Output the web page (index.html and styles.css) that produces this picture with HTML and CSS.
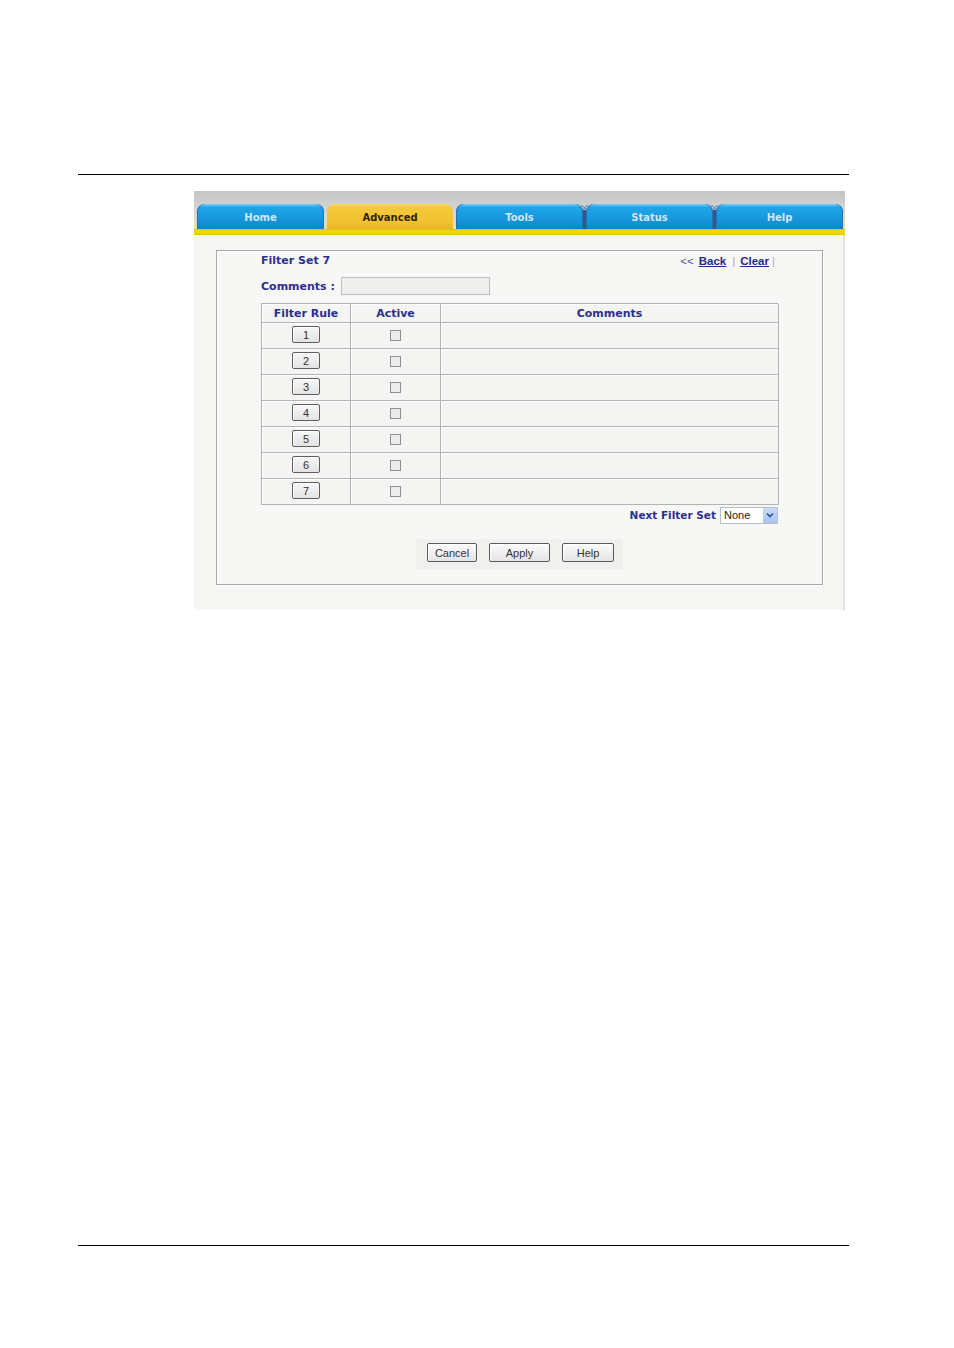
FILE: index.html
```html
<!DOCTYPE html>
<html>
<head>
<meta charset="utf-8">
<link rel="stylesheet" href="styles.css">
</head>
<body>
<div class="page">
  <div class="rule rule-top"></div>
  <div class="shot">
    <div class="topband"></div>
    <div class="tabs">
      <div class="tab blue">Home</div>
      <div class="tab gold">Advanced</div>
      <div class="tab blue">Tools</div>
      <div class="tab blue sep">Status</div>
      <div class="tab blue sep">Help</div>
    </div>
    <div class="strip"></div>
    <div class="content">
      <div class="panel">
        <div class="head-row">
          <span class="title">Filter Set 7</span>
          <span class="nav"><span class="lt">&lt;&lt;</span><a href="#">Back</a><span class="bar">|</span><a href="#">Clear</a><span class="bar last">|</span></span>
        </div>
        <div class="comments-row">
          <span class="label">Comments :</span>
          <span class="input"></span>
        </div>
        <div class="tbl">
          <div class="th">Filter Rule</div>
          <div class="th">Active</div>
          <div class="th">Comments</div>

          <div class="td"><span class="btn-num">1</span></div>
          <div class="td"><span class="chk"></span></div>
          <div class="td"></div>

          <div class="td"><span class="btn-num">2</span></div>
          <div class="td"><span class="chk"></span></div>
          <div class="td"></div>

          <div class="td"><span class="btn-num">3</span></div>
          <div class="td"><span class="chk"></span></div>
          <div class="td"></div>

          <div class="td"><span class="btn-num">4</span></div>
          <div class="td"><span class="chk"></span></div>
          <div class="td"></div>

          <div class="td"><span class="btn-num">5</span></div>
          <div class="td"><span class="chk"></span></div>
          <div class="td"></div>

          <div class="td"><span class="btn-num">6</span></div>
          <div class="td"><span class="chk"></span></div>
          <div class="td"></div>

          <div class="td"><span class="btn-num">7</span></div>
          <div class="td"><span class="chk"></span></div>
          <div class="td"></div>
        </div>
        <div class="next-row">
          <span class="label">Next Filter Set</span>
          <span class="select"><span class="sel-text">None</span><span class="sel-arrow"><svg width="8" height="6" viewBox="0 0 8 6"><path d="M1 1.5 L4 4.5 L7 1.5" fill="none" stroke="#2b4f9e" stroke-width="1.6"/></svg></span></span>
        </div>
        <div class="actions">
          <span class="btn w-cancel">Cancel</span>
          <span class="btn w-apply">Apply</span>
          <span class="btn w-help">Help</span>
        </div>
      </div>
    </div>
  </div>
  <div class="rule rule-bottom"></div>
</div>
</body>
</html>
```

FILE: styles.css
```css
html, body {
  margin: 0;
  padding: 0;
  background: #ffffff;
}

.page {
  width: 954px;
  height: 1348px;
  padding-top: 174px;
  box-sizing: border-box;
}

.rule {
  margin-left: 78px;
  width: 771px;
  border-top: 1px solid #000;
}

.rule-bottom {
  margin-top: 635px;
}

.shot {
  margin-top: 16px;
  margin-left: 194px;
  width: 651px;
  height: 419px;
  background: #f6f6f4;
  display: flex;
  flex-direction: column;
  box-shadow: inset -2px 0 0 #e2e2e2;
}

.topband {
  height: 13px;
  background: linear-gradient(#c4c4c4, #cfcfcf);
}

.tabs {
  height: 25px;
  display: flex;
  gap: 3px;
  padding: 0 2px 0 3px;
  background: linear-gradient(#cfcfcf, #d6d6d6 40%, #e9e2a0);
}

.tab {
  position: relative;
  width: 127px;
  border-radius: 8px 8px 0 0;
  font-family: "DejaVu Sans", Verdana, sans-serif;
  font-weight: bold;
  font-size: 10px;
  display: flex;
  align-items: center;
  justify-content: center;
  padding-top: 2px;
  box-sizing: border-box;
}

.tab.blue {
  background: linear-gradient(#7fd2f6 0px, #22a6e8 3px, #1596dc 60%, #1383cc);
  color: #cfe7f7;
  box-shadow: inset 1px 0 0 #2a6fae, inset -1px 0 0 #2a6fae;
}

.tab.gold {
  width: 126px;
  background: linear-gradient(#f8dc6a 0px, #f5c93c 3px, #f2c230 70%, #e9b522);
  color: #2e2404;
}

.tab.sep::before {
  content: "";
  position: absolute;
  left: -3px;
  top: 6px;
  bottom: 0;
  width: 3px;
  background: #2b5a93;
}

.tab.sep::after {
  content: "";
  position: absolute;
  left: -5px;
  top: 1px;
  width: 7px;
  height: 6px;
  background: linear-gradient(135deg, transparent 40%, #4f7fb5 50%, transparent 60%),
              linear-gradient(225deg, transparent 40%, #4f7fb5 50%, transparent 60%);
}

.strip {
  height: 6px;
  background: linear-gradient(#c9b400 0px, #ecd60e 1px, #efd81a 4px, #d8c400);
}

.content {
  flex: 1;
  padding: 15px 22px 25px 22px;
}

.panel {
  width: 607px;
  height: 335px;
  box-sizing: border-box;
  border: 1px solid #a7a7a7;
  box-shadow: inset 1px 1px 0 #ffffff, 1px 1px 0 #ffffff;
  background: #f7f7f5;
  padding: 0 44px 0 44px;
  display: flex;
  flex-direction: column;
}

.head-row {
  height: 19px;
  display: flex;
  align-items: center;
  justify-content: space-between;
  padding-right: 3px;
}

.title, .label, .th {
  font-family: "DejaVu Sans", Verdana, sans-serif;
  font-weight: bold;
  font-size: 11px;
  color: #2c2f8e;
}

.nav {
  font-family: "Liberation Sans", Arial, sans-serif;
  font-size: 11.5px;
  color: #5a5ea0;
  display: flex;
  align-items: center;
}

.nav a {
  color: #242a8a;
  font-weight: bold;
  text-decoration: underline;
}

.nav .bar {
  color: #a8a8c0;
  margin: 0 5px 0 6px;
}

.nav .bar.last {
  margin-right: 0;
  margin-left: 3px;
}

.nav .lt {
  color: #4c5096;
  margin-right: 5px;
}

.comments-row {
  margin-top: 7px;
  height: 18px;
  display: flex;
  align-items: center;
  gap: 6px;
}

.input {
  width: 149px;
  height: 18px;
  box-sizing: border-box;
  border: 1px solid #bdbdbd;
  background: #efefed;
}

.tbl {
  margin-top: 8px;
  width: 517px;
  display: grid;
  grid-template-columns: 89px 90px 338px;
  grid-template-rows: 19px repeat(7, 26px);
  border-top: 1px solid #b3b3b3;
  border-left: 1px solid #b3b3b3;
  box-sizing: border-box;
  background: #f4f4f2;
}

.th, .td {
  border-right: 1px solid #b3b3b3;
  border-bottom: 1px solid #b3b3b3;
  box-shadow: inset 1px 1px 0 #ffffff;
  display: flex;
  align-items: center;
  justify-content: center;
}

.th {
  padding-top: 1px;
}

.btn-num {
  width: 28px;
  height: 17px;
  box-sizing: border-box;
  border: 1px solid #5e5e5e;
  border-radius: 2px;
  background: linear-gradient(#f7f7f7, #e3e3e3);
  box-shadow: inset 1px 1px 0 #ffffff;
  font-family: "Liberation Sans", Arial, sans-serif;
  font-size: 11px;
  color: #333;
  display: flex;
  align-items: center;
  justify-content: center;
  margin-top: -2px;
}

.chk {
  width: 11px;
  height: 11px;
  box-sizing: border-box;
  border: 1px solid #8f8f8f;
  background: #ececec;
}

.next-row {
  margin-top: 1px;
  height: 18px;
  display: flex;
  align-items: center;
  justify-content: flex-end;
  gap: 4px;
  padding-right: 0px;
}

.next-row .label {
  font-size: 10.5px;
}

.select {
  width: 58px;
  height: 17px;
  box-sizing: border-box;
  border: 1px solid #b5bfcb;
  background: #ffffff;
  display: flex;
  align-items: stretch;
}

.sel-text {
  flex: 1;
  font-family: "Liberation Sans", Arial, sans-serif;
  font-size: 11px;
  color: #222;
  padding-left: 3px;
  display: flex;
  align-items: center;
}

.sel-arrow {
  width: 14px;
  background: linear-gradient(#c9dbf7, #a9c3ef);
  display: flex;
  align-items: center;
  justify-content: center;
}

.actions {
  margin-top: 15px;
  align-self: center;
  display: flex;
  align-items: center;
  gap: 12px;
  padding: 4px 9px 7px 11px;
  background: #f0f0ee;
}

.btn {
  height: 19px;
  box-sizing: border-box;
  border: 1px solid #5a5a5a;
  border-radius: 2px;
  background: linear-gradient(#fbfbfb, #e4e4e4);
  box-shadow: inset 1px 1px 0 #ffffff;
  font-family: "Liberation Sans", Arial, sans-serif;
  font-size: 11px;
  color: #333;
  display: flex;
  align-items: center;
  justify-content: center;
}

.w-cancel { width: 50px; }
.w-apply { width: 61px; }
.w-help { width: 52px; }
```
